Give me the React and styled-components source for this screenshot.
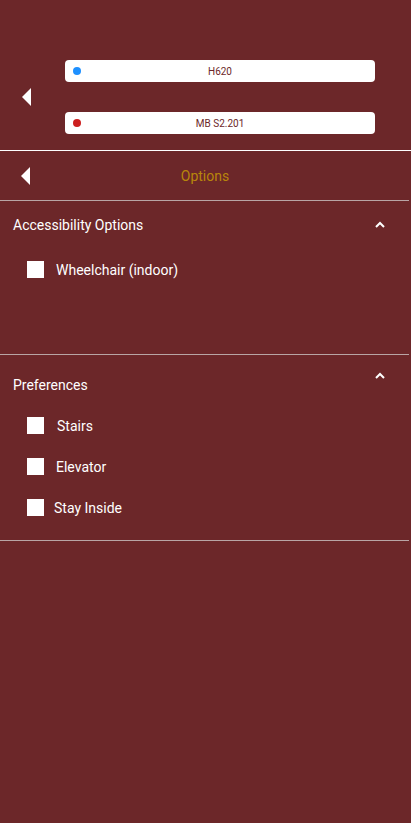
import React from 'react';
import styled, { createGlobalStyle } from 'styled-components';

const GlobalStyle = createGlobalStyle`
  html, body {
    margin: 0;
    padding: 0;
    background: #6c2729;
    font-family: Roboto, "Liberation Sans", sans-serif;
  }
`;

const Page = styled.div`
  width: 411px;
  min-height: 823px;
  background: #6c2729;
  color: #ffffff;
`;

const Header = styled.header`
  height: 151px;
  display: flex;
  align-items: flex-start;
  border-bottom: 1px solid #ffffff;
  box-sizing: border-box;
  padding-top: 60px;
`;

const BackSlot = styled.div`
  width: 65px;
  height: ${({ $height }) => ($height ? `${$height}px` : 'auto')};
  display: flex;
  align-items: center;
  padding-left: ${({ $left }) => $left || 22}px;
  box-sizing: border-box;
  flex-shrink: 0;
`;

const Fields = styled.div`
  width: 310px;
  display: flex;
  flex-direction: column;
  gap: 30px;
`;

const Field = styled.div`
  height: 22px;
  background: #ffffff;
  border-radius: 4px;
  display: flex;
  align-items: center;
  position: relative;
  font-size: 10px;
  color: #6c2729;
`;

const Dot = styled.span`
  position: absolute;
  left: 8px;
  top: 7px;
  width: 8px;
  height: 8px;
  border-radius: 50%;
  background: ${({ $color }) => $color};
`;

const FieldText = styled.span`
  flex: 1;
  text-align: center;
`;

const OptionsBar = styled.div`
  height: 50px;
  display: flex;
  align-items: center;
  border-bottom: 1px solid #b9a5a5;
  width: 409px;
  box-sizing: border-box;
`;

const OptionsTitle = styled.div`
  flex: 1;
  text-align: center;
  color: #b8860b;
  font-size: 14px;
  margin-right: 64px;
`;

const Section = styled.section`
  width: 409px;
  height: ${({ $height }) => $height}px;
  border-bottom: 1px solid #b9a5a5;
  box-sizing: border-box;
`;

const SectionHead = styled.div`
  height: ${({ $height }) => $height || 47}px;
  display: flex;
  align-items: center;
  justify-content: space-between;
  padding: 0 24px 0 13px;
  font-size: 14px;
`;

const Chevron = styled.svg`
  width: 10px;
  height: 7px;
  position: relative;
  top: ${({ $shift }) => $shift || 0}px;
`;

const List = styled.div`
  display: flex;
  flex-direction: column;
  gap: 24px;
  padding: ${({ $top }) => $top}px 0 0 27px;
`;

const CheckRow = styled.label`
  display: flex;
  align-items: center;
  font-size: 14px;
  height: 17px;
`;

const Box = styled.span`
  width: 17px;
  height: 17px;
  background: #ffffff;
  margin-right: ${({ $gap }) => $gap || 12}px;
  flex-shrink: 0;
`;

const Triangle = () => (
  <svg width="10" height="18" viewBox="0 0 10 18">
    <polygon points="9,0 9,18 0,9" fill="#ffffff" />
  </svg>
);

const ChevronUp = ({ shift }) => (
  <Chevron $shift={shift} viewBox="0 0 10 7">
    <polyline points="1,6 5,2 9,6" fill="none" stroke="#ffffff" strokeWidth="2" />
  </Chevron>
);

const App = () => (
  <Page>
    <GlobalStyle />
    <Header>
      <BackSlot $height={74}>
        <Triangle />
      </BackSlot>
      <Fields>
        <Field>
          <Dot $color="#1e90ff" />
          <FieldText>H620</FieldText>
        </Field>
        <Field>
          <Dot $color="#cc1f1f" />
          <FieldText>MB S2.201</FieldText>
        </Field>
      </Fields>
    </Header>

    <OptionsBar>
      <BackSlot $left={21}>
        <Triangle />
      </BackSlot>
      <OptionsTitle>Options</OptionsTitle>
    </OptionsBar>

    <Section $height={154}>
      <SectionHead>
        <span>Accessibility Options</span>
        <ChevronUp />
      </SectionHead>
      <List $top={13}>
        <CheckRow>
          <Box />
          Wheelchair (indoor)
        </CheckRow>
      </List>
    </Section>

    <Section $height={186}>
      <SectionHead $height={60}>
        <span>Preferences</span>
        <ChevronUp shift={-10} />
      </SectionHead>
      <List $top={2}>
        <CheckRow>
          <Box $gap={13} />
          Stairs
        </CheckRow>
        <CheckRow>
          <Box />
          Elevator
        </CheckRow>
        <CheckRow>
          <Box $gap={10} />
          Stay Inside
        </CheckRow>
      </List>
    </Section>
  </Page>
);

export default App;
